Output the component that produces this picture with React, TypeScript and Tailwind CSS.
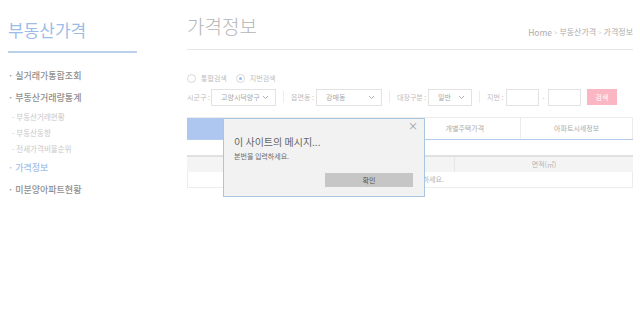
import React from 'react';

const sideMenu = [
  { label: '실거래가통합조회', type: 'main' },
  { label: '부동산거래량통계', type: 'main' },
  { label: '부동산거래현황', type: 'sub' },
  { label: '부동산동향', type: 'sub' },
  { label: '전세가격비율순위', type: 'sub' },
  { label: '가격정보', type: 'active' },
  { label: '미분양아파트현황', type: 'main' },
];

const tabs = ['', '', '개별주택가격', '아파트시세정보'];

const Chevron: React.FC = () => (
  <svg width="7" height="5" viewBox="0 0 7 5" className="shrink-0">
    <path d="M1 1l2.5 2.5L6 1" fill="none" stroke="#b0b0b0" strokeWidth="1" />
  </svg>
);

const Select: React.FC<{ value: string; width: string }> = ({ value, width }) => (
  <div className={`${width} shrink-0 h-[17px] border border-[#e2e2e2] bg-white flex items-center justify-between pl-[9px] pr-[6px] text-[7px] text-[#a8a8a8] whitespace-nowrap`}>
    <span>{value}</span>
    <Chevron />
  </div>
);

const Sep: React.FC = () => <span className="mx-[7px] w-px h-[12px] bg-[#ececec] shrink-0" />;

const App: React.FC = () => {
  return (
    <div
      className="relative w-[640px] h-[322px] bg-white overflow-hidden flex"
      style={{ fontFamily: '"Noto Sans CJK KR", "Noto Sans", sans-serif' }}
    >
      {/* sidebar */}
      <aside className="w-[187px] shrink-0 pl-[8px]">
        <h2 className="pt-[18px] text-[17px] leading-[24px] text-[#9dbde6]">부동산가격</h2>
        <div className="mt-[9px] w-[129px] h-[2px] bg-[#bcd1ec]" />
        <ul className="mt-[12px]">
          {sideMenu.map((m) => (
            <li
              key={m.label}
              className={
                m.type === 'sub'
                  ? 'h-[16px] flex items-center pl-[4px] text-[7.5px] text-[#c8c8c8]'
                  : m.type === 'active'
                  ? 'h-[22px] flex items-center text-[9px] text-[#a3c1e8] font-medium'
                  : 'h-[22px] flex items-center text-[9px] text-[#8f8f8f] font-medium'
              }
            >
              {m.type === 'sub' ? `- ${m.label}` : `· ${m.label}`}
            </li>
          ))}
        </ul>
      </aside>

      {/* main */}
      <main className="w-[446px] shrink-0">
        <div className="h-[50px] flex items-start justify-between border-b border-[#e6e6e6]">
          <h1 className="pt-[12px] text-[19px] leading-[28px] text-[#b4b4b4] font-light">가격정보</h1>
          <div className="pt-[26px] text-[8px] text-[#acacac] flex items-center gap-[2px]">
            <span className="text-[8.5px]">Home</span>
            <span className="text-[#cfcfcf] text-[6px]">&gt;</span>
            <span>부동산가격</span>
            <span className="text-[#cfcfcf] text-[6px]">&gt;</span>
            <span>가격정보</span>
          </div>
        </div>

        {/* radios */}
        <div className="mt-[23px] flex items-center gap-[5px] text-[7px] text-[#bcbcbc]">
          <span className="w-[9px] h-[9px] rounded-full border border-[#d8d8d8] bg-white" />
          <span className="mr-[4px]">통합검색</span>
          <span className="w-[9px] h-[9px] rounded-full border border-[#d8d8d8] bg-white flex items-center justify-center">
            <span className="w-[3px] h-[3px] rounded-full bg-[#9dbde6]" />
          </span>
          <span>지번검색</span>
        </div>

        {/* filters */}
        <div className="mt-[5px] flex items-center text-[7px] text-[#bcbcbc] whitespace-nowrap">
          <span className="w-[24px] shrink-0">시군구 :</span>
          <Select value="고양시덕양구" width="w-[65px]" />
          <Sep />
          <span className="w-[25px] shrink-0">읍면동 :</span>
          <Select value="강매동" width="w-[66px]" />
          <Sep />
          <span className="w-[31px] shrink-0">대장구분 :</span>
          <Select value="일반" width="w-[44px]" />
          <Sep />
          <span className="w-[19px] shrink-0">지번 :</span>
          <div className="w-[33px] h-[17px] border border-[#e2e2e2] shrink-0" />
          <span className="w-[9px] text-center shrink-0">-</span>
          <div className="w-[33px] h-[17px] border border-[#e2e2e2] shrink-0" />
          <button className="ml-[6px] w-[30px] h-[16px] bg-[#fbb6c3] text-white text-[7px] shrink-0">검색</button>
        </div>

        {/* tabs */}
        <div className="mt-[11px] flex h-[23px] border-b border-[#b4cbeb] border-t border-t-[#ececec]">
          {tabs.map((t, i) => (
            <div
              key={i}
              className={`flex-1 flex items-center justify-center text-[7px] text-[#acacac] ${
                i === 0 ? 'bg-[#adc7f1]' : 'border-r border-[#ececec]'
              }`}
            >
              {t}
            </div>
          ))}
        </div>

        {/* table */}
        <div className="mt-[15px] border-t-2 border-[#e0e0e0]">
          <div className="flex h-[15px] bg-[#f4f4f4] text-[7px] text-[#b4b4b4]">
            <div className="w-[268px] border-r border-[#e6e6e6]" />
            <div className="flex-1 flex items-center justify-center">면적(㎡)</div>
          </div>
          <div className="h-[16px] flex items-center justify-center border-b border-x border-[#ececec] text-[7px] text-[#b4b4b4]">
            검색조건을 입력하세요.
          </div>
        </div>
      </main>

      {/* alert dialog */}
      <div className="absolute left-[223px] top-[118px] w-[202px] h-[79px] bg-[#f2f2f2] border border-[#a9c5e0]">
        <div className="absolute right-[6px] top-[-1px] text-[10px] text-[#9a9a9a]">×</div>
        <div className="pl-[10px] pt-[16px] text-[10px] leading-[14px] text-[#666666]">이 사이트의 메시지...</div>
        <div className="pl-[10px] pt-[2px] text-[7px] leading-[10px] text-[#6a6a6a]">본번을 입력하세요.</div>
        <div className="mt-[12px] flex justify-end pr-[11px]">
          <button className="w-[88px] h-[14px] bg-[#c6c6c6] text-[7px] text-[#555555]">확인</button>
        </div>
      </div>
    </div>
  );
};

export default App;
